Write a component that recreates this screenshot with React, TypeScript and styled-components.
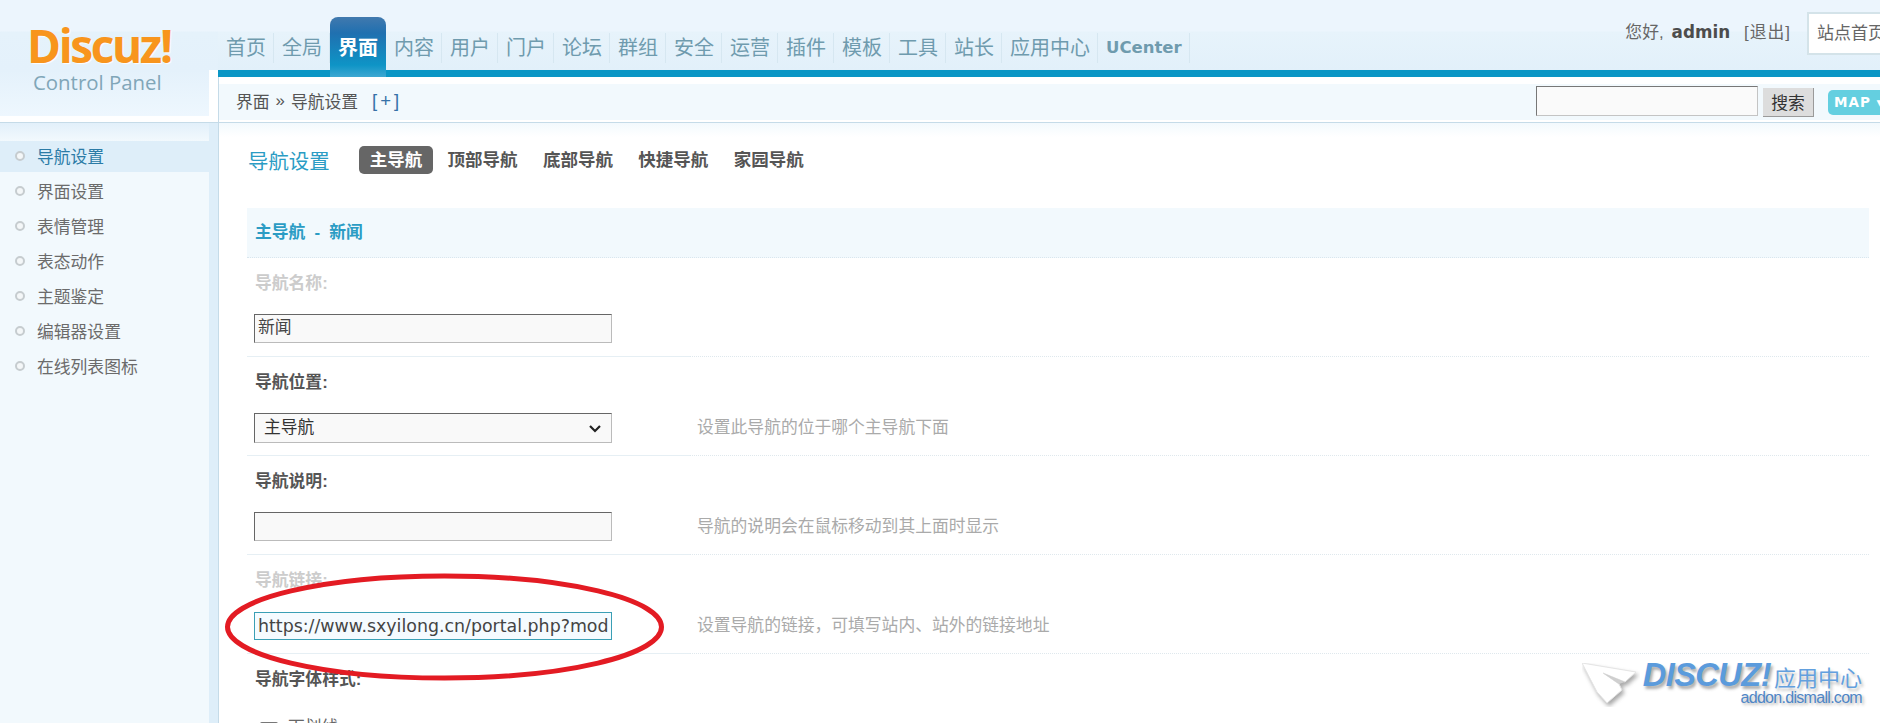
import React from 'react';
import styled, { createGlobalStyle } from 'styled-components';

const sans = '"Liberation Sans", "Noto Sans CJK SC", sans-serif';

const GlobalStyle = createGlobalStyle`
  html, body {
    margin: 0;
    height: 100%;
    overflow: hidden;
    background: #ffffff;
  }
  body {
    font-family: ${sans};
    font-size: 16.8px;
    color: #666666;
  }
`;

const Page = styled.div`
  position: relative;
  height: 723px;
  display: grid;
  grid-template-columns: 218px minmax(0, 1fr);
  overflow: hidden;
`;

const LeftColumn = styled.aside`
  display: flex;
  flex-direction: column;
`;

const LogoBlock = styled.div`
  height: 116px;
  margin-bottom: 6px;
  padding: 22px 0 0 27px;
  box-sizing: border-box;
  background:
    linear-gradient(#ffffff, #ffffff) right bottom / 9px 46px no-repeat,
    linear-gradient(#ecf5fd 0, #ecf5fd 31px, #e5f2fb 32px, #e4f1fb 70px, #eef7fe 116px);
`;

const LogoMark = styled.div`
  font-family: "Open Sans", ${sans};
  font-size: 46px;
  line-height: 46px;
  font-weight: 700;
  letter-spacing: -2.4px;
  color: #f8951d;
  text-shadow: 1px 1px 1px rgba(255, 255, 255, 0.9);
`;

const LogoCaption = styled.div`
  margin: 2px 0 0 6px;
  font-family: "Open Sans", ${sans};
  font-size: 20.4px;
  line-height: 24px;
  color: #80a6b8;
`;

const SidePanel = styled.div`
  flex: 1;
  display: flex;
  border-top: 1px solid #c5dbe8;
`;

const SideList = styled.ul`
  width: 209px;
  margin: 0;
  padding: 18px 0 0;
  list-style: none;
  background: linear-gradient(#e2f0fa 0, #f2f9fd 18px);
`;

const SideItem = styled.li<{ $active?: boolean }>`
  height: 31px;
  box-sizing: border-box;
  margin-bottom: 4px;
  padding: 0 0 1px 15px;
  display: flex;
  align-items: center;
  gap: 12px;
  background: ${p => (p.$active ? '#deeef9' : 'transparent')};
  color: ${p => (p.$active ? '#2b7ba6' : '#6b6b6b')};
`;

const Bullet = styled.span`
  width: 6px;
  height: 6px;
  border: 2px solid #c6cccf;
  border-radius: 50%;
  background: #f4f7f8;
`;

const SideStrip = styled.div`
  width: 9px;
  background: #deeef9;
`;

const RightColumn = styled.div`
  display: flex;
  flex-direction: column;
  min-width: 0;
`;

const Header = styled.header`
  height: 70px;
  flex-shrink: 0;
  display: flex;
  justify-content: space-between;
  border-bottom: 7px solid #0a96c5;
  background: linear-gradient(#ecf5fd 0, #ecf5fd 31px, #e7f3fb 32px, #e2f0fa 70px);
`;

const TopNav = styled.nav`
  display: flex;
  align-items: flex-start;
  padding: 17px 0 0 0;
`;

const TopTab = styled.a<{ $active?: boolean }>`
  position: relative;
  height: ${p => (p.$active ? '44px' : '30px')};
  margin-top: ${p => (p.$active ? '0' : '16px')};
  padding: ${p => (p.$active ? '16px 8px 0' : '0 7px 0 8px')};
  border-right: ${p => (p.$active ? '0' : '1px solid #d6e7f1')};
  border-radius: ${p => (p.$active ? '8px 8px 0 0' : '0')};
  font-size: 20px;
  line-height: 30px;
  white-space: nowrap;
  color: ${p => (p.$active ? '#ffffff' : '#6f9bae')};
  font-weight: ${p => (p.$active ? 700 : 400)};
  background: ${p =>
    p.$active
      ? 'linear-gradient(#4179ae 0, #2070b0 16px, #0e94c6 48px, #3ea8d2 60px)'
      : 'transparent'};
`;

const UCenterTab = styled(TopTab)`
  font-family: "DejaVu Sans", sans-serif;
  font-size: 16.5px;
  font-weight: 700;
`;

const UserArea = styled.div`
  display: flex;
  align-items: flex-start;
  padding-top: 12px;
  margin-right: -27px;
  flex-shrink: 0;
`;

const Greeting = styled.div`
  margin: 8px 16px 0 0;
  line-height: 24px;
  font-size: 16.8px;
  color: #666666;
`;

const UserName = styled.b`
  margin: 0 14px 0 8px;
  font-family: "DejaVu Sans", sans-serif;
  font-size: 16.8px;
  color: #4c4c4c;
`;

const LogoutLink = styled.a`
  letter-spacing: 1px;
`;

const SiteBox = styled.div`
  width: 88px;
  height: 39px;
  padding-left: 8px;
  border: 2px solid #d4e3e9;
  background: #ffffff;
  font-size: 17px;
  line-height: 39px;
  color: #666666;
  white-space: nowrap;
  overflow: hidden;
`;

const Body = styled.div`
  flex: 1;
  display: flex;
  flex-direction: column;
  border-left: 1px solid #c5dbe8;
`;

const Breadcrumb = styled.div`
  height: 36px;
  margin: 7px 0 2px;
  flex-shrink: 0;
  display: flex;
  align-items: center;
  justify-content: space-between;
  padding-left: 17px;
  background: #f2f9fd;
`;

const Trail = styled.div`
  display: flex;
  align-items: center;
  gap: 6px;
  padding-bottom: 2px;
  font-size: 16.8px;
  color: #555555;
`;

const AddLink = styled.a`
  margin-left: 8px;
  font-size: 18.5px;
  letter-spacing: 3px;
  color: #3672a8;
`;

const SearchGroup = styled.div`
  display: flex;
  align-items: center;
  margin-right: -8px;
`;

const SearchInput = styled.div`
  width: 220px;
  height: 28px;
  margin-bottom: 3px;
  border: 1px solid;
  border-color: #777777 #c4c4c4 #c4c4c4 #777777;
  background: #fafafa;
`;

const SearchButton = styled.button`
  width: 51px;
  height: 29px;
  margin-left: 5px;
  padding: 0;
  border: 0;
  border-right: 1px solid #9a9a9a;
  border-bottom: 1px solid #9a9a9a;
  background: #dddddd;
  font-family: ${sans};
  font-size: 16.8px;
  color: #333333;
`;

const MapButton = styled.div`
  width: 60px;
  height: 25px;
  margin-left: 14px;
  padding-left: 6px;
  box-sizing: border-box;
  border-radius: 5px;
  background: #64cfe0;
  font-family: "DejaVu Sans", sans-serif;
  font-size: 13.5px;
  font-weight: 700;
  line-height: 25px;
  letter-spacing: 1px;
  color: #ffffff;
  white-space: nowrap;
`;

const Main = styled.main`
  flex: 1;
  padding: 23px 11px 0 28px;
  border-top: 1px solid #c5dbe8;
  background: linear-gradient(#f2f9fd 0, #ffffff 14px);
`;

const TitleRow = styled.div`
  height: 28px;
  margin-bottom: 34px;
  display: flex;
  align-items: center;
`;

const PageTitle = styled.h3`
  width: 109px;
  margin: 0;
  padding-left: 1px;
  font-size: 20.4px;
  font-weight: 400;
  color: #2b9cc4;
`;

const SubTab = styled.a<{ $active?: boolean }>`
  height: 28px;
  margin: 0 2px;
  padding: 0 10.7px;
  border-radius: 5px;
  font-size: 17.5px;
  font-weight: 700;
  line-height: 28px;
  color: ${p => (p.$active ? '#ffffff' : '#555555')};
  background: ${p => (p.$active ? '#666666' : 'transparent')};
`;

const SectionHead = styled.div`
  height: 49px;
  padding-left: 8px;
  border-bottom: 1px dotted #d9e6ee;
  background: #f2f9fd;
  font-size: 16.8px;
  font-weight: 700;
  word-spacing: 4.5px;
  line-height: 49px;
  color: #2b9cc4;
`;

const FieldLabel = styled.div<{ $muted?: boolean }>`
  height: 26px;
  padding: 13px 0 17px 8px;
  font-size: 16.8px;
  font-weight: 700;
  line-height: 26px;
  color: ${p => (p.$muted ? '#cccccc' : '#555555')};
`;

const FieldRow = styled.div`
  display: flex;
`;

const ControlCell = styled.div`
  width: 436px;
  height: 30px;
  padding: 0 0 12px 7px;
  display: flex;
  align-items: flex-start;
  border-bottom: 1px solid #e6eff4;
`;

const HintCell = styled.div`
  flex: 1;
  height: 30px;
  padding-bottom: 12px;
  padding-left: 7px;
  border-bottom: 1px dotted #dfe8ed;
  font-size: 16.8px;
  line-height: 30px;
  color: #aaaaaa;
`;

const TextBox = styled.div<{ $focus?: boolean }>`
  width: 358px;
  height: ${p => (p.$focus ? '28px' : '29px')};
  margin-top: ${p => (p.$focus ? '1px' : '0')};
  box-sizing: border-box;
  padding-left: 3px;
  border: 1px solid;
  border-color: ${p => (p.$focus ? '#3a9fb5' : '#666666 #bbbbbb #bbbbbb #666666')};
  background: ${p => (p.$focus ? '#f5fbff' : '#f9f9f9')};
  font-family: ${p => (p.$focus ? '"DejaVu Sans", sans-serif' : sans)};
  font-size: ${p => (p.$focus ? '17.4px' : '16.8px')};
  line-height: 26px;
  color: #444444;
  white-space: nowrap;
  overflow: hidden;
`;

const SelectBox = styled(TextBox)`
  height: 30px;
  padding: 0 9px;
  display: flex;
  align-items: center;
  justify-content: space-between;
  color: #333333;
`;

const OptionRow = styled.div`
  margin-top: 8px;
  padding-left: 13px;
  display: flex;
  align-items: flex-start;
  gap: 10px;
  font-size: 16.8px;
  line-height: 20px;
  color: #666666;
`;

const CheckBox = styled.span`
  width: 18px;
  height: 18px;
  margin-top: 4px;
  box-sizing: border-box;
  border: 2px solid #777777;
  border-radius: 2px;
`;

const Annotation = styled.svg`
  position: absolute;
  left: 220px;
  top: 569px;
`;

const Watermark = styled.div`
  position: absolute;
  right: 18px;
  bottom: 16px;
  display: flex;
  gap: 3px;
  pointer-events: none;
`;

const WatermarkText = styled.div`
  display: flex;
  flex-direction: column;
  align-items: flex-end;
`;

const WatermarkTop = styled.div`
  display: flex;
  align-items: center;
  gap: 3px;
  height: 25px;
`;

const WatermarkBrand = styled.span`
  font-family: "Liberation Sans", sans-serif;
  font-size: 32.5px;
  font-weight: 700;
  font-style: italic;
  letter-spacing: -0.5px;
  color: #5b9bdc;
  text-shadow: 2px 3px 3px rgba(70, 70, 70, 0.45);
`;

const WatermarkCn = styled.span`
  font-size: 22px;
  color: #63a0de;
  text-shadow: 2px 3px 3px rgba(70, 70, 70, 0.35);
`;

const WatermarkUrl = styled.span`
  font-family: "Liberation Sans", sans-serif;
  font-size: 16px;
  line-height: 19px;
  letter-spacing: -0.7px;
  color: #4f86c6;
  text-shadow: 2px 2px 3px rgba(70, 70, 70, 0.4);
`;

const topTabs = ['首页', '全局', '界面', '内容', '用户', '门户', '论坛', '群组', '安全', '运营', '插件', '模板', '工具', '站长', '应用中心'];
const sideItems = ['导航设置', '界面设置', '表情管理', '表态动作', '主题鉴定', '编辑器设置', '在线列表图标'];
const subTabs = ['主导航', '顶部导航', '底部导航', '快捷导航', '家园导航'];

const App: React.FC = () => {
  return (
    <Page>
      <GlobalStyle />
      <LeftColumn>
        <LogoBlock>
          <LogoMark>Discuz!</LogoMark>
          <LogoCaption>Control Panel</LogoCaption>
        </LogoBlock>
        <SidePanel>
          <SideList>
            {sideItems.map((item, i) => (
              <SideItem key={item} $active={i === 0}>
                <Bullet />
                {item}
              </SideItem>
            ))}
          </SideList>
          <SideStrip />
        </SidePanel>
      </LeftColumn>

      <RightColumn>
        <Header>
          <TopNav>
            {topTabs.map(tab => (
              <TopTab key={tab} $active={tab === '界面'}>{tab}</TopTab>
            ))}
            <UCenterTab>UCenter</UCenterTab>
          </TopNav>
          <UserArea>
            <Greeting>
              您好,<UserName>admin</UserName><LogoutLink>[退出]</LogoutLink>
            </Greeting>
            <SiteBox>站点首页</SiteBox>
          </UserArea>
        </Header>

        <Body>
          <Breadcrumb>
            <Trail>
              <span>界面</span>
              <span>»</span>
              <span>导航设置</span>
              <AddLink>[+]</AddLink>
            </Trail>
            <SearchGroup>
              <SearchInput />
              <SearchButton>搜索</SearchButton>
              <MapButton>MAP ▾</MapButton>
            </SearchGroup>
          </Breadcrumb>

          <Main>
            <TitleRow>
              <PageTitle>导航设置</PageTitle>
              {subTabs.map((tab, i) => (
                <SubTab key={tab} $active={i === 0}>{tab}</SubTab>
              ))}
            </TitleRow>

            <SectionHead>主导航 - 新闻</SectionHead>

            <FieldLabel $muted>导航名称:</FieldLabel>
            <FieldRow>
              <ControlCell><TextBox>新闻</TextBox></ControlCell>
              <HintCell />
            </FieldRow>

            <FieldLabel>导航位置:</FieldLabel>
            <FieldRow>
              <ControlCell>
                <SelectBox>
                  主导航
                  <svg width="14" height="9" viewBox="0 0 14 9" fill="none" stroke="#222222" strokeWidth="2.2">
                    <path d="M2 2l5 5 5-5" />
                  </svg>
                </SelectBox>
              </ControlCell>
              <HintCell>设置此导航的位于哪个主导航下面</HintCell>
            </FieldRow>

            <FieldLabel>导航说明:</FieldLabel>
            <FieldRow>
              <ControlCell><TextBox /></ControlCell>
              <HintCell>导航的说明会在鼠标移动到其上面时显示</HintCell>
            </FieldRow>

            <FieldLabel $muted>导航链接:</FieldLabel>
            <FieldRow>
              <ControlCell>
                <TextBox $focus>https://www.sxyilong.cn/portal.php?mod</TextBox>
              </ControlCell>
              <HintCell>设置导航的链接&#xFF0C;可填写站内、站外的链接地址</HintCell>
            </FieldRow>

            <FieldLabel>导航字体样式:</FieldLabel>
            <OptionRow>
              <CheckBox />
              下划线
            </OptionRow>
          </Main>
        </Body>
      </RightColumn>

      <Annotation width="450" height="116" viewBox="0 0 450 116" fill="none">
        <ellipse cx="224.5" cy="58" rx="217" ry="51" stroke="#e31b23" strokeWidth="5" />
      </Annotation>

      <Watermark>
        <svg width="58" height="44" viewBox="0 0 58 44">
          <g style={{ filter: 'drop-shadow(2px 3px 2px rgba(60,60,60,0.45))' }}>
            <path d="M0 0L54 9L43 19L21 10L37 21L40 27L25 40L15 29Z" fill="#ffffff" stroke="#e4e4e4" strokeWidth="1" />
            <path d="M21 10L43 19L37 21Z" fill="#cfcfcf" />
          </g>
        </svg>
        <WatermarkText>
          <WatermarkTop>
            <WatermarkBrand>DISCUZ!</WatermarkBrand>
            <WatermarkCn>应用中心</WatermarkCn>
          </WatermarkTop>
          <WatermarkUrl>addon.dismall.com</WatermarkUrl>
        </WatermarkText>
      </Watermark>
    </Page>
  );
};

export default App;
